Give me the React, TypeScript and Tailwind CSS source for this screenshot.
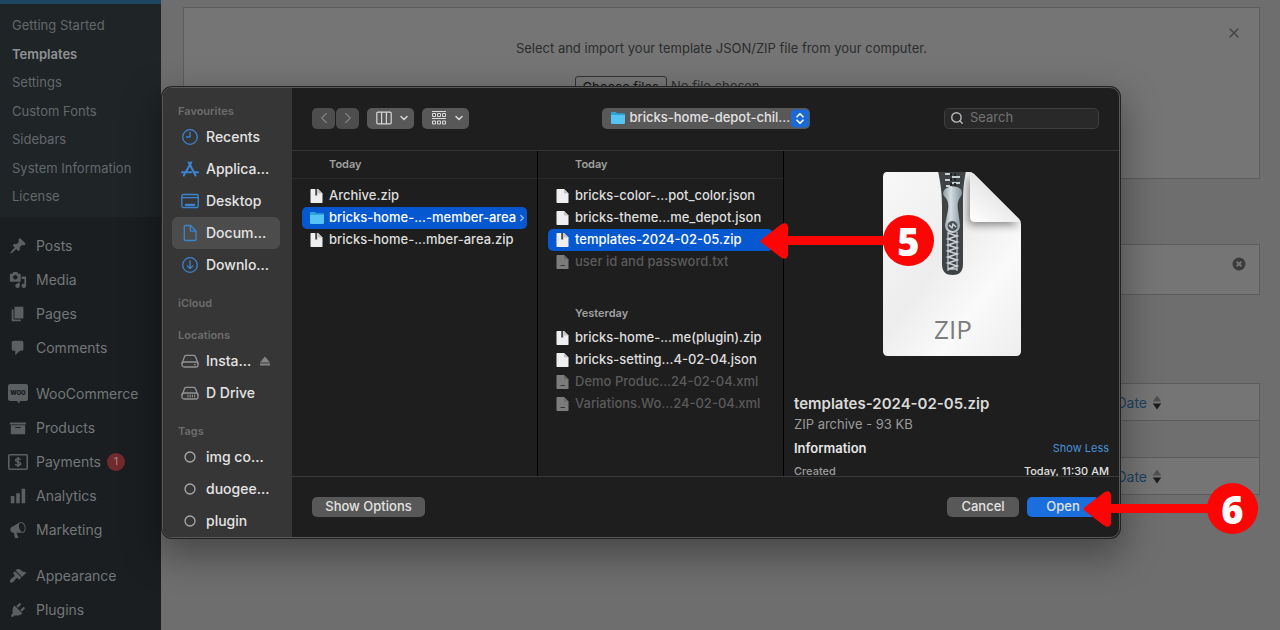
import type { ReactNode } from "react";
import { ChevronDown, ChevronLeft, ChevronRight, Search, X } from "lucide-react";
import clsx from "clsx";

const dash = {
  post: "M10.44 3.02l1.82-1.82 6.36 6.35-1.83 1.82c-1.05-.68-2.48-.57-3.41.36l-.75.75c-.92.93-1.04 2.35-.35 3.41l-1.83 1.82-2.41-2.41-2.8 2.79c-.42.42-3.38 2.71-3.8 2.29s1.86-3.39 2.28-3.81l2.79-2.79L4.1 9.36l1.83-1.82c1.05.69 2.48.57 3.4-.36l.75-.75c.93-.92 1.05-2.35.36-3.41z",
  media:
    "M13 11V4c0-.55-.45-1-1-1h-1.67L9 1H5L3.67 3H2c-.55 0-1 .45-1 1v7c0 .55.45 1 1 1h10c.55 0 1-.45 1-1zM7 4.5c1.38 0 2.5 1.12 2.5 2.5S8.38 9.5 7 9.5 4.5 8.38 4.5 7 5.62 4.5 7 4.5zM14 6h5v10.5c0 1.38-1.12 2.5-2.5 2.5S14 17.88 14 16.5s1.12-2.5 2.5-2.5c.17 0 .34.02.5.05V9h-3V6zm-4 8.05V13h2v3.5c0 1.38-1.12 2.5-2.5 2.5S7 17.88 7 16.5 8.12 14 9.5 14c.17 0 .34.02.5.05z",
  page: "M6 15V2h10v13H6zm-1 1h8v2H3V5h2v11z",
  comment: "M5 2h9c1.1 0 2 .9 2 2v7c0 1.1-.9 2-2 2h-2l-5 5v-5H5c-1.1 0-2-.9-2-2V4c0-1.1.9-2 2-2z",
  archive: "M19 4v2H1V4h18zM2 7h16v10H2V7zm11 3V9H7v1h6z",
  chart: "M18 18V2h-4v16h4zm-6 0V7H8v11h4zm-6 0v-8H2v8h4z",
  megaphone:
    "M18.15 5.94c.46 1.62.38 3.22-.02 4.48-.42 1.28-1.26 2.18-2.3 2.48-.16.06-.26.06-.4.06-.06.02-.12.02-.18.02-.06.02-.14.02-.22.02h-6.8l2.22 5.5c.02.14-.06.26-.14.34-.08.1-.24.16-.34.16H6.95c-.1 0-.26-.06-.34-.16-.08-.08-.16-.2-.14-.34l-1-5.5H4.25l-.02-.02c-.5.06-1.08-.18-1.54-.62s-.88-1.08-1.06-1.88c-.24-.8-.2-1.56-.02-2.2.18-.62.58-1.08 1.06-1.3l.02-.02 9-5.4c.1-.06.18-.1.24-.16.06-.04.14-.08.24-.12.16-.08.28-.12.5-.18 1.04-.3 2.24.1 3.22.98s1.84 2.24 2.26 3.86zm-2.58 5.98h-.02c.4-.1.74-.34 1.04-.7.58-.7.86-1.76.86-3.04 0-.64-.1-1.3-.28-1.98-.34-1.36-1.02-2.5-1.78-3.24s-1.68-1.1-2.46-.88c-.82.22-1.4.96-1.7 2-.32 1.04-.28 2.36.06 3.72.38 1.36 1 2.5 1.8 3.24.78.74 1.62 1.1 2.48.88z",
  brush:
    "M14.48 11.06L7.41 3.99l1.5-1.5c.5-.56 2.3-.47 3.51.32 1.21.8 1.43 1.28 2.91 2.1 1.18.64 2.45 1.26 4.45.85zm-.71.71L6.7 4.7 4.93 6.47c-.39.39-.39 1.02 0 1.41l1.06 1.06c.39.39.39 1.03 0 1.42-.6.6-1.43 1.11-2.21 1.69-.35.26-.7.53-1.01.84C1.43 14.23.4 16.08 1.4 17.07c.99 1 2.84-.03 4.18-1.36.31-.31.58-.66.85-1.02.57-.78 1.08-1.61 1.69-2.21.39-.39 1.02-.39 1.41 0l1.06 1.06c.39.39 1.02.39 1.41 0z",
  plug: "M13.11 4.36L9.87 7.6 8 5.73l3.24-3.24c.35-.34 1.05-.2 1.56.32.52.51.66 1.21.31 1.55zm-8 1.77l.91-1.12 9.01 9.01-1.19.84c-.71.71-2.63 1.16-3.82 1.16H6.14L4.9 17.26c-.59.59-1.54.59-2.12 0-.59-.58-.59-1.53 0-2.12l1.24-1.24v-3.88c0-1.13.4-3.19 1.09-3.89zm7.26 3.97l3.24-3.24c.34-.35 1.04-.21 1.55.31.52.51.66 1.21.31 1.55l-3.24 3.25z",
};

function Dashicon({ d }: { d: string }) {
  return (
    <svg viewBox="0 0 20 20" className="size-[18px]" fill="currentColor">
      <path d={d} />
    </svg>
  );
}

function WooIcon() {
  return (
    <svg viewBox="0 0 20 20" className="size-5" fill="currentColor">
      <path d="M2 0h16a2 2 0 0 1 2 2v13a2 2 0 0 1-2 2h-6l-1 2.500-2-2.500H2a2 2 0 0 1-2-2V2a2 2 0 0 1 2-2z" />
      <text x="10" y="11" textAnchor="middle" fontSize="6" fontWeight="900" fill="#1a1e20">
        WOO
      </text>
    </svg>
  );
}

function PaymentsIcon() {
  return (
    <svg viewBox="0 0 20 16" className="h-4 w-5" fill="none" stroke="currentColor" strokeWidth="1.6">
      <rect x="0.8" y="0.8" width="18.400" height="14.400" rx="1" />
      <path d="M12.500 5.800c-.5-.8-1.300-1.100-2.500-1.100-1.400 0-2.400.5-2.400 1.600 0 2.400 5 1 5 3.500 0 1.100-1.100 1.600-2.600 1.600-1.200 0-2.200-.4-2.700-1.300M10 3v10" />
    </svg>
  );
}

const subMenu = [
  "Getting Started",
  "Templates",
  "Settings",
  "Custom Fonts",
  "Sidebars",
  "System Information",
  "License",
];

type MenuItem = { label: string; icon: ReactNode; badge?: number };

const menuGroups: MenuItem[][] = [
  [
    { label: "Posts", icon: <Dashicon d={dash.post} /> },
    { label: "Media", icon: <Dashicon d={dash.media} /> },
    { label: "Pages", icon: <Dashicon d={dash.page} /> },
    { label: "Comments", icon: <Dashicon d={dash.comment} /> },
  ],
  [
    { label: "WooCommerce", icon: <WooIcon /> },
    { label: "Products", icon: <Dashicon d={dash.archive} /> },
    { label: "Payments", icon: <PaymentsIcon />, badge: 1 },
    { label: "Analytics", icon: <Dashicon d={dash.chart} /> },
    { label: "Marketing", icon: <Dashicon d={dash.megaphone} /> },
  ],
  [
    { label: "Appearance", icon: <Dashicon d={dash.brush} /> },
    { label: "Plugins", icon: <Dashicon d={dash.plug} /> },
  ],
];

function AdminMenu() {
  return (
    <nav className="w-[161px] shrink-0 bg-[#1a1e20] text-[#73777a]">
      <div className="h-1 bg-[#1c4661]" />
      <ul className="flex h-[213px] flex-col justify-between bg-[#1f2427] px-3 pt-2 pb-[6px] text-[13px] text-[#63686b]">
        {subMenu.map((item) => (
          <li key={item} className="flex h-7 items-center">
            <a href="#" className={clsx(item === "Templates" && "font-semibold text-[#8f9294]")}>
              {item}
            </a>
          </li>
        ))}
      </ul>
      {menuGroups.map((group, i) => (
        <ul key={i} className="mt-3 text-sm">
          {group.map((item) => (
            <li key={item.label}>
              <a href="#" className="flex h-[34px] items-center">
                <span className="flex w-9 justify-center text-[#5b5f62]">{item.icon}</span>
                {item.label}
                {item.badge && (
                  <span className="ml-[6px] flex size-[18px] items-center justify-center rounded-full bg-[#732a2c] text-[11px] text-[#9b8586]">
                    {item.badge}
                  </span>
                )}
              </a>
            </li>
          ))}
        </ul>
      ))}
    </nav>
  );
}

function DateHeading() {
  return (
    <th className="pr-[97px] text-right font-normal">
      <a href="#" className="inline-flex items-center gap-[5px] text-sm text-[#1d4260]">
        Date
        <svg viewBox="0 0 10 16" className="h-4 w-[10px]">
          <path d="M5 0.500 9.200 6.500H0.800z" fill="#505050" />
          <path d="M5 14.500 9.200 8.500H0.800z" fill="#1c1c1c" />
        </svg>
      </a>
    </th>
  );
}

function TemplatesPage() {
  return (
    <main className="flex-1 bg-[#6e6e6e] pt-[7px] pr-5 pl-[22px] text-[#2b2d2e]">
      <section className="relative flex h-[172px] flex-col items-center border border-[#5c5c5c] bg-[#757575] pt-[30px] text-[13px]">
        <p className="leading-5">Select and import your template JSON/ZIP file from your computer.</p>
        <div className="mt-[18px] flex w-[294px] items-center gap-1">
          <label
            htmlFor="template-file"
            className="rounded-[3px] border border-[#343434] px-[7px] leading-5 text-[#141414]"
          >
            Choose files
          </label>
          <input id="template-file" type="file" className="sr-only" />
          <span>No file chosen</span>
        </div>
        <button aria-label="Close" className="absolute top-[17px] right-[17px] text-[#444444]">
          <X size={16} strokeWidth={2.2} />
        </button>
      </section>

      <section className="mt-[65px] flex h-[51px] items-start justify-end border border-[#5c5c5c] bg-[#757575] pt-3 pr-[13px]">
        <button aria-label="Dismiss">
          <svg viewBox="0 0 14 14" className="size-[14px]">
            <circle cx="7" cy="7" r="6.500" fill="#3b3b3b" />
            <path d="m4.600 4.600 4.800 4.800m0-4.800-4.800 4.800" stroke="#757575" strokeWidth="2" />
          </svg>
        </button>
      </section>

      <table className="mt-[88px] w-full border-collapse border border-[#5c5c5c] bg-[#757575]">
        <thead>
          <tr className="h-[37px] border-b border-[#5c5c5c]">
            <DateHeading />
          </tr>
        </thead>
        <tbody>
          <tr className="h-[37px] bg-[#6f6f6f]">
            <td />
          </tr>
        </tbody>
        <tfoot>
          <tr className="h-[37px] border-t border-[#5c5c5c]">
            <DateHeading />
          </tr>
        </tfoot>
      </table>
    </main>
  );
}

function LineIcon({ children, className }: { children: ReactNode; className?: string }) {
  return (
    <svg
      viewBox="0 0 18 18"
      className={clsx("size-[18px] shrink-0", className)}
      fill="none"
      stroke="currentColor"
      strokeWidth="1.3"
      strokeLinecap="round"
      strokeLinejoin="round"
    >
      {children}
    </svg>
  );
}

const tagIcon = (
  <LineIcon className="text-[#a9a9a9]">
    <circle cx="9" cy="9" r="5" />
  </LineIcon>
);

type Place = { label: string; icon: ReactNode; selected?: boolean; eject?: boolean };

const places: { title: string; items: Place[] }[] = [
  {
    title: "Favourites",
    items: [
      {
        label: "Recents",
        icon: (
          <LineIcon>
            <circle cx="9" cy="9" r="7.300" />
            <path d="M9 4.500V9H5.500" />
          </LineIcon>
        ),
      },
      {
        label: "Applica...",
        icon: (
          <LineIcon>
            <path d="M7.800 2.500 14.500 15.500M10.200 2.500 4.800 12M3.600 14 2.800 15.500M1 12.300h9.200M13.500 12.300H17" strokeWidth="2.100" />
          </LineIcon>
        ),
      },
      {
        label: "Desktop",
        icon: (
          <LineIcon>
            <rect x="0.800" y="2.500" width="16.400" height="13" rx="1.500" />
            <path d="M1 5.700h16" />
            <path d="M4.800 12.800h8.400" strokeWidth="2.200" />
          </LineIcon>
        ),
      },
      {
        label: "Docum...",
        selected: true,
        icon: (
          <LineIcon>
            <path d="M3.300 2.800c0-.8.500-1.300 1.300-1.300h4.900L15 7v8.200c0 .8-.5 1.300-1.300 1.300H4.600c-.8 0-1.300-.5-1.300-1.300zM9.300 1.500v4.400c0 .8.400 1.200 1.200 1.200H15" />
          </LineIcon>
        ),
      },
      {
        label: "Downlo...",
        icon: (
          <LineIcon>
            <circle cx="9" cy="9" r="7.300" />
            <path d="M9 5v7.500M6.200 9.900 9 12.600l2.800-2.700" />
          </LineIcon>
        ),
      },
    ],
  },
  { title: "iCloud", items: [] },
  {
    title: "Locations",
    items: [
      {
        label: "Insta...",
        eject: true,
        icon: (
          <LineIcon className="text-[#929292]">
            <path d="M1 11.200 3.700 4.300c.3-.7.800-1 1.500-1h7.600c.7 0 1.200.3 1.500 1L17 11.200" />
            <rect x="1" y="10" width="16" height="5" rx="2" />
            <path d="M13.500 12.500h.5" />
          </LineIcon>
        ),
      },
      {
        label: "D Drive",
        icon: (
          <LineIcon className="text-[#929292]">
            <path d="M1 11.200 3.700 4.300c.3-.7.800-1 1.500-1h7.600c.7 0 1.200.3 1.500 1L17 11.200" />
            <rect x="1" y="9" width="16" height="6" rx="2" />
            <path d="M7 11v2M9.200 11v2M11.400 11v2M13.600 11v2" strokeWidth="1" />
          </LineIcon>
        ),
      },
    ],
  },
  {
    title: "Tags",
    items: [
      { label: "img co...", icon: tagIcon },
      { label: "duogee...", icon: tagIcon },
      { label: "plugin", icon: tagIcon },
    ],
  },
];

function PlacesSidebar() {
  return (
    <aside className="flex w-[129px] shrink-0 flex-col gap-3 overflow-hidden bg-[#363637] pt-[13px] pr-3 pl-[9px]">
      {places.map((group) => (
        <section key={group.title}>
          <h3 className="flex h-5 items-center px-[6px] text-[11px] font-semibold text-[#6c6c6d]">{group.title}</h3>
          {group.items.map((item) => (
            <button
              key={item.label}
              className={clsx(
                "flex h-8 w-full items-center gap-[7px] rounded-md pr-[10px] pl-[9px] text-sm font-medium whitespace-nowrap text-[#e4e4e4]",
                item.selected && "bg-[#4c4c4d]"
              )}
            >
              <span className="text-[#3d84d0]">{item.icon}</span>
              {item.label}
              {item.eject && (
                <svg viewBox="0 0 10 10" className="ml-auto size-[10px] shrink-0" fill="#858585">
                  <path d="M5 0.500 10 6.500H0zM0 7.500h10V9.500H0z" />
                </svg>
              )}
            </button>
          ))}
        </section>
      ))}
    </aside>
  );
}

function FolderIcon() {
  return (
    <svg viewBox="0 0 16 14" className="h-[14px] w-4 shrink-0">
      <path d="M1 2.200C1 1.500 1.400 1 2.100 1h3.700l1.300 1.300H14c.6 0 1 .4 1 1V6H1z" fill="#2fa3d6" />
      <path d="M1 4h14v7.800c0 .7-.4 1.200-1.100 1.200H2.100C1.400 13 1 12.500 1 11.800z" fill="#56c4f2" />
    </svg>
  );
}

function FileIcon({ zip, dim }: { zip?: boolean; dim?: boolean }) {
  return (
    <svg viewBox="0 0 16 16" className={clsx("size-4 shrink-0", dim && "opacity-45")}>
      <path d="M2.500 1H9l4.500 4.500v9c0 .3-.2.500-.5.500H2.500c-.6 0-1-.4-1-1V2c0-.6.400-1 1-1z" fill="#efefef" />
      <path d="M9 1v4c0 .3.200.500.500.500h4z" fill="#c4c4c4" />
      {zip && <path d="M6.200 1h2v6.500h-2z" fill="#4a4a4a" />}
      {dim && <path d="M5.500 11.500h4.500" stroke="#555" />}
    </svg>
  );
}

type Entry = { name: string; kind: "folder" | "zip" | "file"; selected?: boolean; dim?: boolean };

const firstColumn = [
  {
    title: "Today",
    entries: [
      { name: "Archive.zip", kind: "zip" },
      { name: "bricks-home-...-member-area", kind: "folder", selected: true },
      { name: "bricks-home-...mber-area.zip", kind: "zip" },
    ] as Entry[],
  },
];

const secondColumn = [
  {
    title: "Today",
    entries: [
      { name: "bricks-color-...pot_color.json", kind: "file" },
      { name: "bricks-theme...me_depot.json", kind: "file" },
      { name: "templates-2024-02-05.zip", kind: "zip", selected: true },
      { name: "user id and password.txt", kind: "file", dim: true },
    ] as Entry[],
  },
  {
    title: "Yesterday",
    entries: [
      { name: "bricks-home-...me(plugin).zip", kind: "zip" },
      { name: "bricks-setting...4-02-04.json", kind: "file" },
      { name: "Demo Produc...24-02-04.xml", kind: "file", dim: true },
      { name: "Variations.Wo...24-02-04.xml", kind: "file", dim: true },
    ] as Entry[],
  },
];

function FileColumn({ groups }: { groups: { title: string; entries: Entry[] }[] }) {
  return (
    <div className="w-[246px] shrink-0 border-r border-black">
      {groups.map((group, i) => (
        <section key={group.title} className={clsx(i > 0 && "mt-[26px]")}>
          <h3
            className={clsx(
              "flex h-7 items-center pl-[37px] text-[11px] font-semibold text-[#a0a0a0]",
              i === 0 && "mb-[6px] border-b border-[#2b2b2b]"
            )}
          >
            {group.title}
          </h3>
          <ul className="px-[10px]">
            {group.entries.map((entry) => (
              <li key={entry.name}>
                <button
                  className={clsx(
                    "flex h-[22px] w-full items-center rounded-[5px] pl-[7px] text-[13px] font-medium whitespace-nowrap",
                    entry.selected ? "bg-[#0558d0] text-white" : entry.dim ? "text-[#5a5a5a]" : "text-[#dedede]"
                  )}
                >
                  {entry.kind === "folder" ? <FolderIcon /> : <FileIcon zip={entry.kind === "zip"} dim={entry.dim} />}
                  <span className="ml-1">{entry.name}</span>
                  {entry.kind === "folder" && (
                    <ChevronRight size={10} strokeWidth={3} className="ml-auto shrink-0 text-[#9fc0ee]" />
                  )}
                </button>
              </li>
            ))}
          </ul>
        </section>
      ))}
    </div>
  );
}

function ZipArtwork() {
  return (
    <svg viewBox="0 0 140 185" className="mx-auto block h-[185px] w-[140px]">
      <defs>
        <linearGradient id="paper" x1="0" y1="0" x2="1" y2="1">
          <stop offset="0" stopColor="#f8f8f8" />
          <stop offset="0.450" stopColor="#ededed" />
          <stop offset="0.700" stopColor="#fafafa" />
          <stop offset="1" stopColor="#ededed" />
        </linearGradient>
        <linearGradient id="fold" x1="0" y1="1" x2="0.600" y2="0.300">
          <stop offset="0" stopColor="#ffffff" />
          <stop offset="1" stopColor="#e2e2e2" />
        </linearGradient>
        <linearGradient id="metal" x1="0" y1="0" x2="1" y2="0">
          <stop offset="0" stopColor="#8f9ca3" />
          <stop offset="0.400" stopColor="#d4dee3" />
          <stop offset="1" stopColor="#83929a" />
        </linearGradient>
        <filter id="foldShadow" x="-40%" y="-40%" width="200%" height="200%">
          <feGaussianBlur stdDeviation="4" />
        </filter>
        <clipPath id="sheet">
          <path d="M5 1h82q3 0 5 2l45 45q2 2 2 5v127q0 5-5 5H6q-5 0-5-5V6q0-5 4-5z" />
        </clipPath>
      </defs>
      <g clipPath="url(#sheet)">
        <rect width="140" height="185" fill="url(#paper)" />
        <path d="M86 4v44q0 6 6 6h46z" fill="#000" opacity="0.450" filter="url(#foldShadow)" />
        <path d="M88 0v46q0 5 5 5h50V50L92 0z" fill="url(#fold)" />
        <path d="M56 0h28c-3 14-3 24-3 36v57c0 8-4 11-10.500 11S60 101 60 93V36c0-12-1-22-4-36z" fill="#3f4346" />
        <path
          d="M63 3h7M70 6h8M63 9h7M70 12h8M64 15h6M70 18h7"
          stroke="#c5d0d5"
          strokeWidth="2"
        />
        <path d="M69 2v20M73 2v20" stroke="#202325" strokeWidth="2" strokeDasharray="3 2" />
        <path d="M66 61v39M75 61v39" stroke="#aab6bc" strokeWidth="1.500" />
        <path
          d="M66 62 75 65 66 68 75 71 66 74 75 77 66 80 75 83 66 86 75 89 66 92 75 95 66 98h9"
          fill="none"
          stroke="#c9d3d8"
          strokeWidth="1.600"
        />
        <path
          d="M65 17c3-2 9-2 12 0 3 1 4 5 2 8-3 4-4 8-3 14l2 15c0 5-3 8-7.500 8S63 59 63 54l3-15c1-6 0-10-4-14-2-3 0-7 3-8z"
          fill="url(#metal)"
        />
        <circle cx="70.500" cy="55" r="5" fill="#4a5155" />
        <path d="m67 54 3 3 1-4 3 3" fill="none" stroke="#d0dade" strokeWidth="1.400" />
      </g>
      <text x="71" y="168" textAnchor="middle" fontSize="26" fill="#7d7d7d" fontFamily="Open Sans, sans-serif">
        ZIP
      </text>
    </svg>
  );
}

function Preview() {
  return (
    <div className="min-w-0 flex-1 overflow-hidden px-[10px] pt-5">
      <ZipArtwork />
      <h2 className="mt-[38px] text-[15px] leading-5 font-semibold text-[#dadada]">templates-2024-02-05.zip</h2>
      <p className="text-[13px] leading-5 text-[#9b9b9b]">ZIP archive - 93 KB</p>
      <div className="mt-1 flex items-center justify-between leading-5">
        <h3 className="text-[13px] font-semibold text-[#e6e6e6]">Information</h3>
        <button className="text-[11px] text-[#4a90d9]">Show Less</button>
      </div>
      <dl className="mt-[3px] flex justify-between text-[11px] leading-5 font-medium">
        <dt className="text-[#9b9b9b]">Created</dt>
        <dd className="text-[#e0e0e0]">Today, 11:30 AM</dd>
      </dl>
    </div>
  );
}

function Toolbar() {
  return (
    <header className="flex h-[63px] shrink-0 items-center border-b border-[#343434] px-5 pb-[2px]">
      <div className="flex flex-1 items-center">
        <button aria-label="Back" className="flex h-[21px] w-[23px] items-center justify-center rounded-[5px] bg-[#4d4d4d] text-[#7d7d7d]">
          <ChevronLeft size={18} strokeWidth={1.8} />
        </button>
        <button aria-label="Forward" className="ml-px flex h-[21px] w-[23px] items-center justify-center rounded-[5px] bg-[#4d4d4d] text-[#7d7d7d]">
          <ChevronRight size={18} strokeWidth={1.8} />
        </button>
        <button aria-label="Column view" className="ml-2 flex h-[21px] w-[47px] items-center justify-between rounded-[5px] bg-[#585858] pr-1 pl-[9px] text-[#d8d8d8]">
          <svg viewBox="0 0 16 14" className="h-[14px] w-4" fill="none" stroke="currentColor" strokeWidth="1.200">
            <rect x="0.800" y="1.200" width="14.400" height="11.600" rx="1" />
            <path d="M5.600 1.200v11.600M10.400 1.200v11.600" />
          </svg>
          <ChevronDown size={12} strokeWidth={3} />
        </button>
        <button aria-label="Group items" className="ml-2 flex h-[21px] w-[47px] items-center justify-between rounded-[5px] bg-[#585858] pr-1 pl-[9px] text-[#d8d8d8]">
          <svg viewBox="0 0 16 14" className="h-[14px] w-4" fill="none" stroke="currentColor">
            <path d="M1 0.500h14M1 7.500h14" />
            <path d="M1.500 2.500h3v3h-3zM6.500 2.500h3v3h-3zM11.500 2.500h3v3h-3zM1.500 10h3v3h-3zM6.500 10h3v3h-3zM11.500 10h3v3h-3z" />
          </svg>
          <ChevronDown size={12} strokeWidth={3} />
        </button>
      </div>
      <div className="flex h-[21px] w-[208px] items-center rounded-[5px] bg-[#585858] pr-px pl-2">
        <FolderIcon />
        <select
          aria-label="Current folder"
          className="ml-1 min-w-0 flex-1 appearance-none bg-transparent text-[13px] font-medium text-[#e2e2e2] outline-none"
        >
          <option>bricks-home-depot-chil...</option>
        </select>
        <svg viewBox="0 0 18 18" className="h-[19px] w-[18px] shrink-0" fill="none" stroke="#fff" strokeWidth="1.600" strokeLinecap="round" strokeLinejoin="round">
          <rect width="18" height="18" rx="4" fill="#1a69d4" stroke="none" />
          <path d="M6 7.300 9 4.300l3 3M6 10.700l3 3 3-3" />
        </svg>
      </div>
      <div className="flex flex-1 justify-end">
        <label className="flex h-[21px] w-[155px] items-center gap-[6px] rounded-[5px] border border-[#3f3f3f] bg-[#292929] px-[5px]">
          <Search size={14} strokeWidth={2.4} className="shrink-0 text-[#b9b9b9]" />
          <input
            aria-label="Search"
            placeholder="Search"
            className="w-full min-w-0 bg-transparent text-[13px] text-white outline-none placeholder:text-[#737373]"
          />
        </label>
      </div>
    </header>
  );
}

function StepMarker({ step, wide }: { step: number; wide?: boolean }) {
  return (
    <div className="flex items-center text-[#fb0505]">
      <svg viewBox="0 0 28 38" className="h-[38px] w-7" fill="currentColor">
        <path d="M2 17 21 2.500Q27 -1 28 5V33Q27 39 21 35.500L2 21Q-1 19 2 17z" />
      </svg>
      <div className={clsx("-ml-px h-[9px] bg-current", wide ? "w-[99px]" : "w-[98px]")} />
      <div className="-ml-[2px] flex size-[51px] items-center justify-center rounded-full bg-current">
        <span className="font-['Open_Sans',sans-serif] text-[38px] leading-none font-extrabold text-white">{step}</span>
      </div>
    </div>
  );
}

function OpenDialog() {
  return (
    <div className="absolute top-[87px] right-[160px] left-[162px]">
      <div
        role="dialog"
        aria-label="Open"
        className="flex h-[451px] overflow-hidden rounded-[10px] border border-[#585858] bg-[#1e1e1e] shadow-[0_0_0_1px_#222,0_14px_36px_4px_rgba(0,0,0,0.35)]"
      >
        <PlacesSidebar />
        <div className="flex min-w-0 flex-1 flex-col">
          <Toolbar />
          <div className="flex min-h-0 flex-1">
            <FileColumn groups={firstColumn} />
            <FileColumn groups={secondColumn} />
            <Preview />
          </div>
          <footer className="flex h-[61px] shrink-0 items-center gap-2 border-t border-[#3a3a3a] px-5 text-[13px] font-medium text-[#e2e2e2]">
            <button className="mr-auto h-5 w-[113px] rounded-[5px] bg-[#585858]">Show Options</button>
            <button className="h-5 w-[72px] rounded-[5px] bg-[#585858]">Cancel</button>
            <button className="h-5 w-[72px] rounded-[5px] bg-[#1a6fdc]">Open</button>
          </footer>
        </div>
      </div>
      <div className="absolute top-[128px] left-[598px]">
        <StepMarker step={5} />
      </div>
      <div className="absolute top-[396px] -right-[138px]">
        <StepMarker step={6} wide />
      </div>
    </div>
  );
}

export default function App() {
  return (
    <div className="relative flex h-screen overflow-hidden font-[Inter,sans-serif]">
      <AdminMenu />
      <TemplatesPage />
      <OpenDialog />
    </div>
  );
}
